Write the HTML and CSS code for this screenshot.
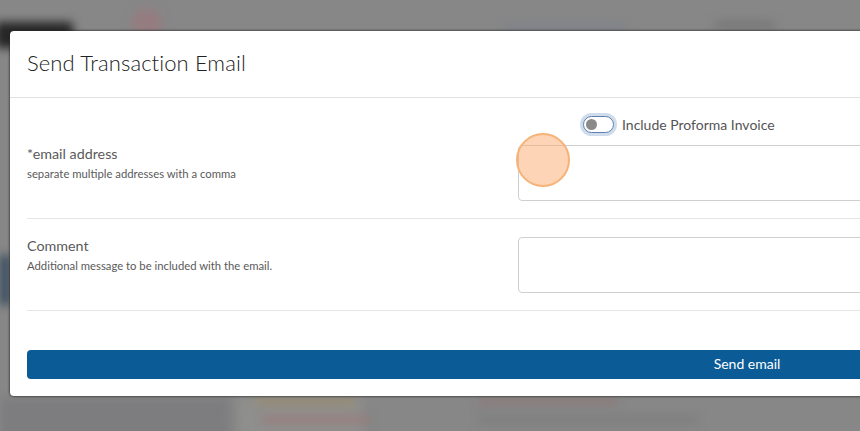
FILE: index.html
```html
<!DOCTYPE html>
<html>
<head>
<meta charset="utf-8">
<link rel="stylesheet" href="styles.css">
</head>
<body>
<div class="backdrop">
  <div class="blob b1"></div>
  <div class="blob b2"></div>
  <div class="blob b3"></div>
  <div class="blob b4"></div>
  <div class="blob b5"></div>
  <div class="blob b6"></div>
  <div class="blob b7"></div>
  <div class="blob b8"></div>
  <div class="blob b9"></div>
  <div class="blob b10"></div>
  <div class="blob b11"></div>
</div>
<div class="modal">
  <div class="modal-header">
    <h1 class="title">Send Transaction Email</h1>
  </div>
  <div class="modal-body">
    <div class="toggle-row">
      <span class="switch"><span class="knob"></span></span>
      <span class="toggle-label">Include Proforma Invoice</span>
    </div>
    <div class="form-row">
      <div class="label-col">
        <div class="label">*email address</div>
        <div class="help">separate multiple addresses with a comma</div>
      </div>
      <div class="input-col">
        <div class="input"></div>
      </div>
    </div>
    <div class="form-row">
      <div class="label-col">
        <div class="label">Comment</div>
        <div class="help">Additional message to be included with the email.</div>
      </div>
      <div class="input-col">
        <div class="input"></div>
      </div>
    </div>
    <button class="send-btn">Send email</button>
  </div>
</div>
<div class="click-marker"></div>
</body>
</html>
```
FILE: styles.css
```css
html, body {
  margin: 0;
  padding: 0;
  width: 860px;
  height: 431px;
  overflow: hidden;
  background: #878787;
  font-family: Lato, "Open Sans", sans-serif;
}
.backdrop {
  position: absolute;
  inset: 0;
  overflow: hidden;
}
.blob {
  position: absolute;
  filter: blur(5px);
}
.b1 { left: -5px; top: 22px; width: 78px; height: 26px; background: #262626; border-radius: 4px; }
.b2 { left: 132px; top: 8px; width: 30px; height: 30px; background: #957c80; border-radius: 50%; }
.b3 { left: 505px; top: 25px; width: 120px; height: 5px; background: #7a7f8c; }
.b4 { left: 715px; top: 22px; width: 60px; height: 6px; background: #727272; }
.b5 { left: 0; top: 255px; width: 10px; height: 50px; background: #34495c; }
.b6 { left: 0; top: 398px; width: 230px; height: 40px; background: #7d7d80; }
.b7 { left: 238px; top: 396px; width: 125px; height: 40px; background: #8f8f8d; }
.b8 { left: 255px; top: 399px; width: 100px; height: 5px; background: #9c8a68; }
.b9 { left: 262px; top: 417px; width: 108px; height: 5px; background: #9c7676; }
.b10 { left: 478px; top: 399px; width: 140px; height: 5px; background: #8c7474; }
.b11 { left: 478px; top: 417px; width: 220px; height: 5px; background: #7a7a7a; }
.modal {
  position: absolute;
  left: 10px;
  top: 31px;
  width: 1474px;
  background: #fff;
  border-radius: 4px;
  box-shadow: 0 0 2px 1px rgba(40, 40, 40, 0.6);
}
.modal-header {
  box-sizing: border-box;
  height: 67px;
  border-bottom: 1px solid #e2e2e2;
  display: flex;
  align-items: center;
  padding: 0 17px 4px;
}
.title {
  margin: 0;
  font-weight: 300;
  font-size: 22px;
  color: #222;
  letter-spacing: 0.1px;
}
.modal-body {
  padding: 15px 17px 17px;
}
.toggle-row {
  height: 22px;
  display: flex;
  align-items: center;
  padding-left: 556px;
  gap: 8px;
  margin-bottom: 1px;
}
.switch {
  box-sizing: border-box;
  width: 31px;
  height: 17px;
  border: 1.5px solid #5f7fae;
  border-radius: 9px;
  background: #fff;
  box-shadow: 0 0 0 3px #cfdcec;
  display: flex;
  align-items: center;
  padding-left: 2px;
}
.knob {
  width: 11px;
  height: 11px;
  border-radius: 50%;
  background: #8a8a8a;
}
.toggle-label {
  font-size: 14px;
  color: #555;
}
.form-row {
  display: grid;
  grid-template-columns: 491px 1fr;
  padding: 9px 0 17px;
  border-bottom: 1px solid #e6e6e6;
}
.form-row + .form-row {
  padding-top: 18px;
}
.label {
  font-size: 14.3px;
  line-height: 18px;
  color: #5a5a5a;
}
.help {
  margin-top: 4px;
  font-size: 11.3px;
  line-height: 14px;
  color: #5a5a5a;
}
.input {
  box-sizing: border-box;
  height: 56px;
  border: 1px solid #cfcfcf;
  border-radius: 4px;
}
.send-btn {
  display: block;
  width: 100%;
  margin-top: 39px;
  height: 29px;
  padding: 0 0 2px;
  border: none;
  border-radius: 4px;
  background: #0b5b97;
  color: #fff;
  font-family: Lato, sans-serif;
  font-size: 14px;
}
.click-marker {
  position: absolute;
  left: 516px;
  top: 133px;
  width: 50px;
  height: 50px;
  border-radius: 50%;
  background: rgba(252, 170, 110, 0.5);
  border: 2px solid #f7b277;
}
```
